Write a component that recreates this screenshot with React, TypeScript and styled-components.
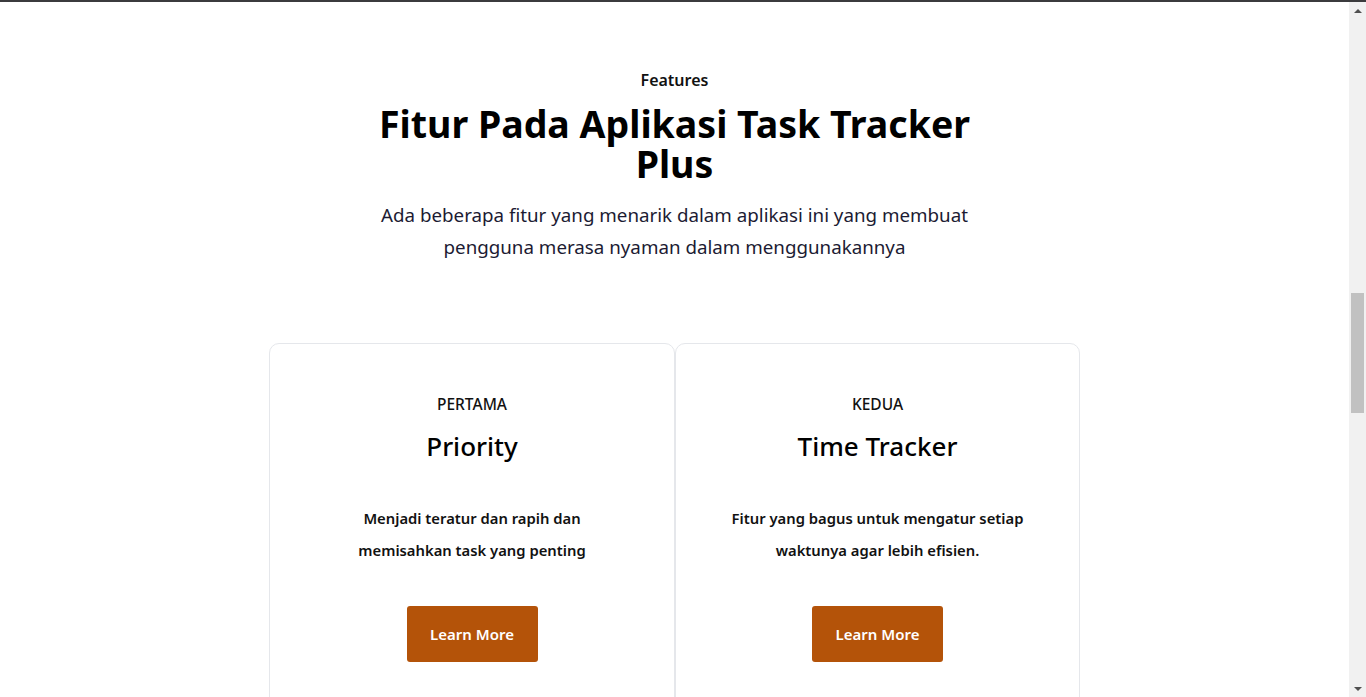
import React from "react";
import styled, { createGlobalStyle } from "styled-components";

const GlobalStyle = createGlobalStyle`
  html, body { margin: 0; padding: 0; background: #ffffff; }
  body { font-family: "Noto Sans", "Open Sans", Arial, sans-serif; color: #000; overflow: hidden; }
  * { box-sizing: border-box; }
`;

const Page = styled.div`
  display: flex;
  flex-direction: column;
  height: 100vh;
`;

const TopLine = styled.div`
  height: 2px;
  background: #3b3b3d;
  flex-shrink: 0;
`;

const Body = styled.div`
  display: flex;
  flex: 1;
  min-height: 0;
`;

const Main = styled.main`
  flex: 1;
  overflow: hidden;
  display: flex;
  flex-direction: column;
  align-items: center;
  padding-top: 66px;
`;

const Intro = styled.header`
  width: 600px;
  display: flex;
  flex-direction: column;
  align-items: center;
  text-align: center;
`;

const Eyebrow = styled.p`
  margin: 0;
  font-size: 16px;
  line-height: 24px;
  font-weight: 600;
  color: #111;
`;

const Title = styled.h1`
  margin: 12px 0 0;
  font-size: 37.5px;
  line-height: 40px;
  font-weight: 700;
  color: #000;
`;

const Lead = styled.p`
  margin: 15px 0 0;
  font-size: 18.75px;
  line-height: 32px;
  font-weight: 400;
  color: #1c1b33;
`;

const CardGrid = styled.section`
  margin-top: 80px;
  display: grid;
  grid-template-columns: 406px 405px;
`;

const Card = styled.article`
  border: 1px solid #e5e7eb;
  border-radius: 10px;
  height: 420px;
  padding: 49px 24px 0;
  display: flex;
  flex-direction: column;
  align-items: center;
  text-align: center;
`;

const Order = styled.span`
  font-size: 15.5px;
  line-height: 22px;
  font-weight: 500;
  color: #111;
  text-transform: uppercase;
`;

const CardTitle = styled.h2`
  margin: 13px 0 0;
  font-size: 26px;
  line-height: 36px;
  font-weight: 500;
  color: #000;
`;

const CardText = styled.p`
  margin: 38px 0 0;
  font-size: 14.8px;
  line-height: 32px;
  font-weight: 600;
  color: #111;
`;

const Button = styled.button`
  margin-top: 40px;
  width: 131px;
  height: 56px;
  border: none;
  border-radius: 3px;
  background: #b45309;
  color: #ffffff;
  font-family: inherit;
  font-size: 15px;
  font-weight: 600;
  cursor: pointer;
`;

const Scrollbar = styled.div`
  width: 17px;
  flex-shrink: 0;
  background: #f1f1f1;
  display: flex;
  flex-direction: column;
  align-items: center;
`;

const Arrow = styled.div<{ $dir: "up" | "down" }>`
  height: 17px;
  width: 17px;
  display: flex;
  align-items: center;
  justify-content: center;
  &::before {
    content: "";
    width: 0;
    height: 0;
    border-left: 4px solid transparent;
    border-right: 4px solid transparent;
    ${(p) =>
      p.$dir === "up"
        ? "border-bottom: 4px solid #505050;"
        : "border-top: 4px solid #505050;"}
  }
`;

const Track = styled.div`
  flex: 1;
  width: 100%;
  padding: 274px 2px 0;
`;

const Thumb = styled.div`
  height: 120px;
  background: #c1c1c1;
`;

const features = [
  {
    order: "Pertama",
    title: "Priority",
    lines: ["Menjadi teratur dan rapih dan", "memisahkan task yang penting"],
  },
  {
    order: "Kedua",
    title: "Time Tracker",
    lines: ["Fitur yang bagus untuk mengatur setiap", "waktunya agar lebih efisien."],
  },
];

export default function App() {
  return (
    <>
      <GlobalStyle />
      <Page>
        <TopLine />
        <Body>
          <Main>
            <Intro>
              <Eyebrow>Features</Eyebrow>
              <Title>Fitur Pada Aplikasi Task Tracker Plus</Title>
              <Lead>
                Ada beberapa fitur yang menarik dalam aplikasi ini yang membuat pengguna merasa
                nyaman dalam menggunakannya
              </Lead>
            </Intro>
            <CardGrid>
              {features.map((f) => (
                <Card key={f.title}>
                  <Order>{f.order}</Order>
                  <CardTitle>{f.title}</CardTitle>
                  <CardText>
                    {f.lines[0]}
                    <br />
                    {f.lines[1]}
                  </CardText>
                  <Button>Learn More</Button>
                </Card>
              ))}
            </CardGrid>
          </Main>
          <Scrollbar>
            <Arrow $dir="up" />
            <Track>
              <Thumb />
            </Track>
            <Arrow $dir="down" />
          </Scrollbar>
        </Body>
      </Page>
    </>
  );
}
